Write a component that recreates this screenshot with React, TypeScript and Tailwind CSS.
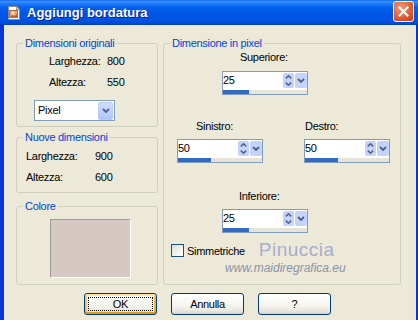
import React from "react";

function AppIcon() {
  return (
    <svg width="16" height="16" viewBox="0 0 16 16">
      <path d="M2.5 1.5h8l3 3v10h-11z" fill="#FFFFFF" stroke="#8C8C8C" />
      <path d="M10.5 1.5v3h3" fill="#E4E4E4" stroke="#8C8C8C" />
      <rect x="3.5" y="5.5" width="8" height="7" fill="#E9A070" stroke="#B5683C" />
      <circle cx="7" cy="8" r="1.8" fill="#F6D8B8" />
      <path d="M4 12l2.5-2 2 1.2 2.5-2.2v3z" fill="#C0602E" />
    </svg>
  );
}

function CloseButton() {
  return (
    <div className="w-[21px] h-[21px] mt-[1px] self-start rounded-[3px] border border-white bg-[radial-gradient(circle_at_35%_30%,#EE9B7C_0%,#E06A43_45%,#CC4A22_80%,#B83A16_100%)] flex items-center justify-center">
      <svg width="11" height="11" viewBox="0 0 11 11">
        <path d="M1.5 1.5l8 8M9.5 1.5l-8 8" stroke="#FFFFFF" strokeWidth="2.2" strokeLinecap="square" />
      </svg>
    </div>
  );
}

function ComboButton() {
  return (
    <div className="w-[15px] h-[18px] rounded-[2px] bg-[linear-gradient(180deg,#D1DEFD_0%,#C0D2FB_50%,#AFC5F7_100%)] border border-[#B9CBF5] flex items-center justify-center">
      <svg width="8" height="5" viewBox="0 0 8 5">
        <path d="M1 1l3 3 3-3" stroke="#4D6185" strokeWidth="1.8" fill="none" />
      </svg>
    </div>
  );
}

function Spinner({ value, fill }: { value: string; fill: number }) {
  return (
    <div className="w-[86px] h-[24px] border border-[#7F9DB9] bg-white flex flex-col">
      <div className="flex h-[17px]">
        <span className="flex-1 leading-[17px] text-[11px] text-black">{value}</span>
        <div className="my-[1px] w-[11px] rounded-[2px] bg-[#C3D3FB] flex flex-col items-center justify-center gap-[3px]">
          <svg width="7" height="4" viewBox="0 0 7 4">
            <path d="M0.8 3.4l2.7-2.6 2.7 2.6" stroke="#4D6185" strokeWidth="1.5" fill="none" />
          </svg>
          <svg width="7" height="4" viewBox="0 0 7 4">
            <path d="M0.8 0.6l2.7 2.6 2.7-2.6" stroke="#4D6185" strokeWidth="1.5" fill="none" />
          </svg>
        </div>
        <div className="my-[1px] ml-[1px] w-[12px] rounded-[2px] bg-[#C3D3FB] flex items-center justify-center">
          <svg width="8" height="5" viewBox="0 0 8 5">
            <path d="M1 1l3 3 3-3" stroke="#4D6185" strokeWidth="1.8" fill="none" />
          </svg>
        </div>
      </div>
      <div className="mt-[1px] h-[4px] bg-[#E6E3D8]">
        <div className="h-full bg-[#316AC5]" style={{ width: fill }} />
      </div>
    </div>
  );
}

function Group({
  title,
  className,
  children,
}: {
  title: string;
  className: string;
  children: React.ReactNode;
}) {
  return (
    <fieldset className={`border border-[#D0D0BF] rounded-[3px] ${className}`}>
      <legend className="ml-[6px] px-[2px] text-[11px] leading-[13px] text-[#0046D5]">{title}</legend>
      {children}
    </fieldset>
  );
}

function XpButton({ label, focused }: { label: string; focused?: boolean }) {
  return (
    <div
      className={`relative w-[73px] h-[22px] rounded-[3px] border border-[#003C74] bg-[linear-gradient(180deg,#FFFFFF_0%,#F6F5F0_55%,#E8E6DD_85%,#D8D2C6_100%)] flex items-center justify-center text-[11px] text-black ${
        focused
          ? "shadow-[inset_0_2px_0_#FFE6A8,inset_0_-2px_0_#E59A14,inset_2px_0_0_#F9C45A,inset_-2px_0_0_#F2B13A]"
          : ""
      }`}
    >
      {focused && <span className="absolute inset-[3px] border border-dotted border-black" />}
      {label}
    </div>
  );
}

export default function App() {
  return (
    <div className="w-[418px] h-[320px] overflow-hidden flex flex-col font-['Liberation_Sans',Arial,sans-serif] text-[11px] leading-[13px] tracking-[-0.3px] text-black">
      <div className="h-[25px] shrink-0 flex items-center pl-[6px] pr-[4px] bg-[linear-gradient(180deg,#0A61F0_0%,#3C8FFF_6%,#1E7BFB_14%,#0460EE_30%,#0055E5_55%,#0054E3_80%,#0049D4_94%,#003DB8_100%)]">
        <AppIcon />
        <span className="ml-[5px] text-[13px] font-bold tracking-normal text-white [text-shadow:1px_1px_0_#0A1A8C]">
          Aggiungi bordatura
        </span>
        <div className="ml-auto self-stretch flex">
          <CloseButton />
        </div>
      </div>

      <div className="flex-1 flex flex-col bg-[#ECE9D8] border-l-[4px] border-r-[2px] border-[#0735DB]">
        <div className="flex pl-[12px] gap-[5px]">
          <div className="flex flex-col w-[142px] mt-[12px]">
            <Group title="Dimensioni originali" className="h-[90px]">
              <div className="grid grid-cols-[58px_auto] gap-y-[8px] ml-[32px] mt-[5px]">
                <span>Larghezza:</span>
                <span>800</span>
                <span>Altezza:</span>
                <span>550</span>
              </div>
              <div className="ml-[17px] mt-[11px] w-[81px] h-[21px] border border-[#7F9DB9] bg-white flex items-center pl-[3px] pr-[1px]">
                <span className="flex-1">Pixel</span>
                <ComboButton />
              </div>
            </Group>

            <Group title="Nuove dimensioni" className="h-[62px] mt-[4px]">
              <div className="grid grid-cols-[69px_auto] gap-y-[8px] ml-[9px] mt-[6px]">
                <span>Larghezza:</span>
                <span>900</span>
                <span>Altezza:</span>
                <span>600</span>
              </div>
            </Group>

            <Group title="Colore" className="h-[85px] mt-[7px]">
              <div className="ml-[33px] mt-[6px] w-[81px] h-[59px] bg-[#D6C9C4] border border-t-[#9E9B93] border-l-[#9E9B93] border-b-white border-r-white" />
            </Group>
          </div>

          <Group title="Dimensione in pixel" className="w-[238px] h-[248px] mt-[12px]">
            <div className="flex flex-col">
              <span className="ml-[76px] mt-[1px]">Superiore:</span>
              <div className="ml-[58px] mt-[7px]">
                <Spinner value="25" fill={26} />
              </div>

              <div className="flex mt-[25px]">
                <div className="flex flex-col ml-[13px]">
                  <span className="pl-[19px]">Sinistro:</span>
                  <div className="mt-[6px]">
                    <Spinner value="50" fill={33} />
                  </div>
                </div>
                <div className="flex flex-col ml-[41px]">
                  <span className="pl-[1px]">Destro:</span>
                  <div className="mt-[6px]">
                    <Spinner value="50" fill={33} />
                  </div>
                </div>
              </div>

              <span className="ml-[75px] mt-[27px]">Inferiore:</span>
              <div className="ml-[58px] mt-[6px]">
                <Spinner value="25" fill={26} />
              </div>

              <div className="flex items-start mt-[6px]">
                <div className="ml-[7px] mt-[5px] w-[13px] h-[13px] border border-[#1C5180] bg-[linear-gradient(135deg,#DCDCD7_0%,#F2F2EE_60%,#FFFFFF_100%)]" />
                <span className="ml-[3px] mt-[6px]">Simmetriche</span>
                <span className="ml-[14px] text-[19px] leading-[22px] tracking-[0.5px] text-[#A9ACCD]">
                  Pinuccia
                </span>
              </div>
              <span className="ml-[61px] text-[12px] leading-[14px] tracking-normal italic text-[#8E91A8]">
                www.maidiregrafica.eu
              </span>
            </div>
          </Group>
        </div>

        <div className="flex gap-[14px] pl-[80px] mt-[8px]">
          <XpButton label="OK" focused />
          <XpButton label="Annulla" />
          <XpButton label="?" />
        </div>
      </div>
    </div>
  );
}
